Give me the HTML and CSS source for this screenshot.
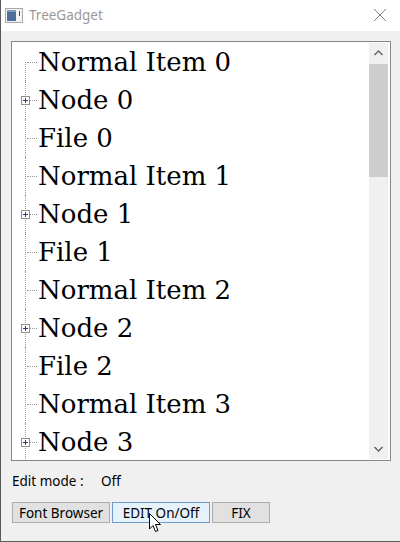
FILE: index.html
```html
<!DOCTYPE html>
<html>
<head>
<meta charset="utf-8">
<link rel="stylesheet" href="styles.css">
</head>
<body>
<div class="window">
  <div class="titlebar">
    <svg class="app-icon" width="18" height="15" viewBox="0 0 18 15">
      <rect x="0.5" y="0.5" width="17" height="14" fill="#f4f4f4" stroke="#a9a9a9"/>
      <rect x="2" y="2" width="9" height="11" fill="#4d6f99"/>
      <rect x="2" y="2" width="9" height="2" fill="#7f9cc0"/>
      <rect x="14" y="3" width="1" height="5" fill="#3c4d66"/>
    </svg>
    <span class="title">TreeGadget</span>
    <svg class="close" width="14" height="14" viewBox="0 0 14 14">
      <path d="M1 1 L13 13 M13 1 L1 13" stroke="#808080" stroke-width="1" fill="none"/>
    </svg>
  </div>
  <div class="client">
    <div class="treebox">
      <ul class="tree">
        <li class="row first"><span class="twig"></span><span class="label">Normal Item 0</span></li>
        <li class="row"><span class="twig"><svg class="plus" width="9" height="9" viewBox="0 0 9 9"><rect x="0.5" y="0.5" width="8" height="8" fill="#fff" stroke="#8f8f8f"/><path d="M2 4.5 H7 M4.5 2 V7" stroke="#1e3d8a" stroke-width="1"/></svg></span><span class="label">Node 0</span></li>
        <li class="row"><span class="twig"></span><span class="label">File 0</span></li>
        <li class="row"><span class="twig"></span><span class="label">Normal Item 1</span></li>
        <li class="row"><span class="twig"><svg class="plus" width="9" height="9" viewBox="0 0 9 9"><rect x="0.5" y="0.5" width="8" height="8" fill="#fff" stroke="#8f8f8f"/><path d="M2 4.5 H7 M4.5 2 V7" stroke="#1e3d8a" stroke-width="1"/></svg></span><span class="label">Node 1</span></li>
        <li class="row"><span class="twig"></span><span class="label">File 1</span></li>
        <li class="row"><span class="twig"></span><span class="label">Normal Item 2</span></li>
        <li class="row"><span class="twig"><svg class="plus" width="9" height="9" viewBox="0 0 9 9"><rect x="0.5" y="0.5" width="8" height="8" fill="#fff" stroke="#8f8f8f"/><path d="M2 4.5 H7 M4.5 2 V7" stroke="#1e3d8a" stroke-width="1"/></svg></span><span class="label">Node 2</span></li>
        <li class="row"><span class="twig"></span><span class="label">File 2</span></li>
        <li class="row"><span class="twig"></span><span class="label">Normal Item 3</span></li>
        <li class="row"><span class="twig"><svg class="plus" width="9" height="9" viewBox="0 0 9 9"><rect x="0.5" y="0.5" width="8" height="8" fill="#fff" stroke="#8f8f8f"/><path d="M2 4.5 H7 M4.5 2 V7" stroke="#1e3d8a" stroke-width="1"/></svg></span><span class="label">Node 3</span></li>
      </ul>
      <div class="scrollbar">
        <div class="arrow">
          <svg width="9" height="6" viewBox="0 0 9 6"><path d="M0.5 5 L4.5 1 L8.5 5" stroke="#606060" stroke-width="1.4" fill="none"/></svg>
        </div>
        <div class="track">
          <div class="thumb"></div>
        </div>
        <div class="arrow">
          <svg width="9" height="6" viewBox="0 0 9 6"><path d="M0.5 1 L4.5 5 L8.5 1" stroke="#606060" stroke-width="1.4" fill="none"/></svg>
        </div>
      </div>
    </div>
    <div class="status">
      <span class="status-label">Edit mode :</span>
      <span class="status-value">Off</span>
    </div>
    <div class="buttons">
      <button class="btn wide">Font Browser</button>
      <button class="btn wide hover">EDIT On/Off</button>
      <button class="btn narrow">FIX</button>
      <svg class="cursor" width="13" height="20" viewBox="0 0 13 20">
        <path d="M0.5 0.5 L0.5 16 L4 12.5 L6.5 18.5 L9 17.5 L6.5 11.5 L11.5 11.5 Z" fill="#fff" stroke="#000" stroke-width="1" stroke-linejoin="miter"/>
      </svg>
    </div>
  </div>
</div>
</body>
</html>
```

FILE: styles.css
```css
html, body {
  margin: 0;
  padding: 0;
  background: #f0f0f0;
}

.window {
  width: 399px;
  height: 541px;
  border-left: 1px solid #5a5a5a;
  border-bottom: 1px solid #5a5a5a;
  background: #f0f0f0;
  display: flex;
  flex-direction: column;
  overflow: hidden;
}

.titlebar {
  height: 31px;
  background: #ffffff;
  display: flex;
  align-items: center;
  flex: none;
}

.app-icon {
  margin-left: 4px;
  margin-top: -1px;
}

.title {
  margin-left: 6px;
  font-family: "Noto Sans", "Open Sans", sans-serif;
  font-size: 13.5px;
  color: #9a9a9a;
  margin-top: -1px;
}

.close {
  margin-left: auto;
  margin-right: 13px;
  margin-top: -1px;
}

.client {
  flex: 1;
  display: flex;
  flex-direction: column;
  padding: 10px 0 0 10px;
}

.treebox {
  border: 1px solid #828790;
  background: #ffffff;
  display: flex;
  padding: 1px 2px 1px 0;
  box-sizing: content-box;
  height: 416px;
  width: 376px;
}

.tree {
  list-style: none;
  margin: 0;
  padding: 0 0 0 13px;
  flex: 1;
  overflow: hidden;
}

.row {
  display: flex;
  align-items: center;
  height: 38px;
  position: relative;
}

.twig {
  width: 13px;
  height: 38px;
  flex: none;
  position: relative;
}

.twig::before {
  content: "";
  position: absolute;
  left: 0;
  top: 0;
  bottom: 0;
  border-left: 1px dotted #9a9a9a;
}

.row.first .twig::before {
  top: 19px;
}

.twig::after {
  content: "";
  position: absolute;
  left: 2px;
  right: 1px;
  top: 19px;
  border-top: 1px dotted #9a9a9a;
}

.plus {
  position: absolute;
  left: -4px;
  top: 15px;
  z-index: 1;
}

.label {
  font-family: "DejaVu Serif", "Liberation Serif", serif;
  font-size: 26px;
  line-height: 38px;
  color: #000;
  white-space: nowrap;
}

.scrollbar {
  width: 19px;
  flex: none;
  background: #f0f0f0;
  display: flex;
  flex-direction: column;
}

.arrow {
  height: 20px;
  display: flex;
  align-items: center;
  justify-content: center;
  flex: none;
}

.track {
  flex: 1;
  padding-top: 1px;
}

.thumb {
  height: 113px;
  background: #cdcdcd;
}

.status {
  display: flex;
  align-items: center;
  height: 20px;
  margin-top: 10px;
  padding-left: 1px;
  font-family: "Noto Sans", "Open Sans", sans-serif;
  font-size: 13.5px;
  color: #000;
}

.status-label {
  width: 89px;
  flex: none;
}

.buttons {
  display: flex;
  gap: 2px;
  margin-top: 11px;
  padding-left: 1px;
  position: relative;
}

.btn {
  height: 21px;
  margin: 0;
  padding: 0;
  border: 1px solid #adadad;
  background: #e1e1e1;
  font-family: "Noto Sans", "Open Sans", sans-serif;
  font-size: 13.5px;
  color: #000;
  line-height: 18px;
}

.btn.wide {
  width: 98px;
}

.btn.narrow {
  width: 58px;
}

.btn.hover {
  background: #e5f1fb;
  border-color: #6f9bd0;
}

.cursor {
  position: absolute;
  left: 138px;
  top: 11px;
}
```
